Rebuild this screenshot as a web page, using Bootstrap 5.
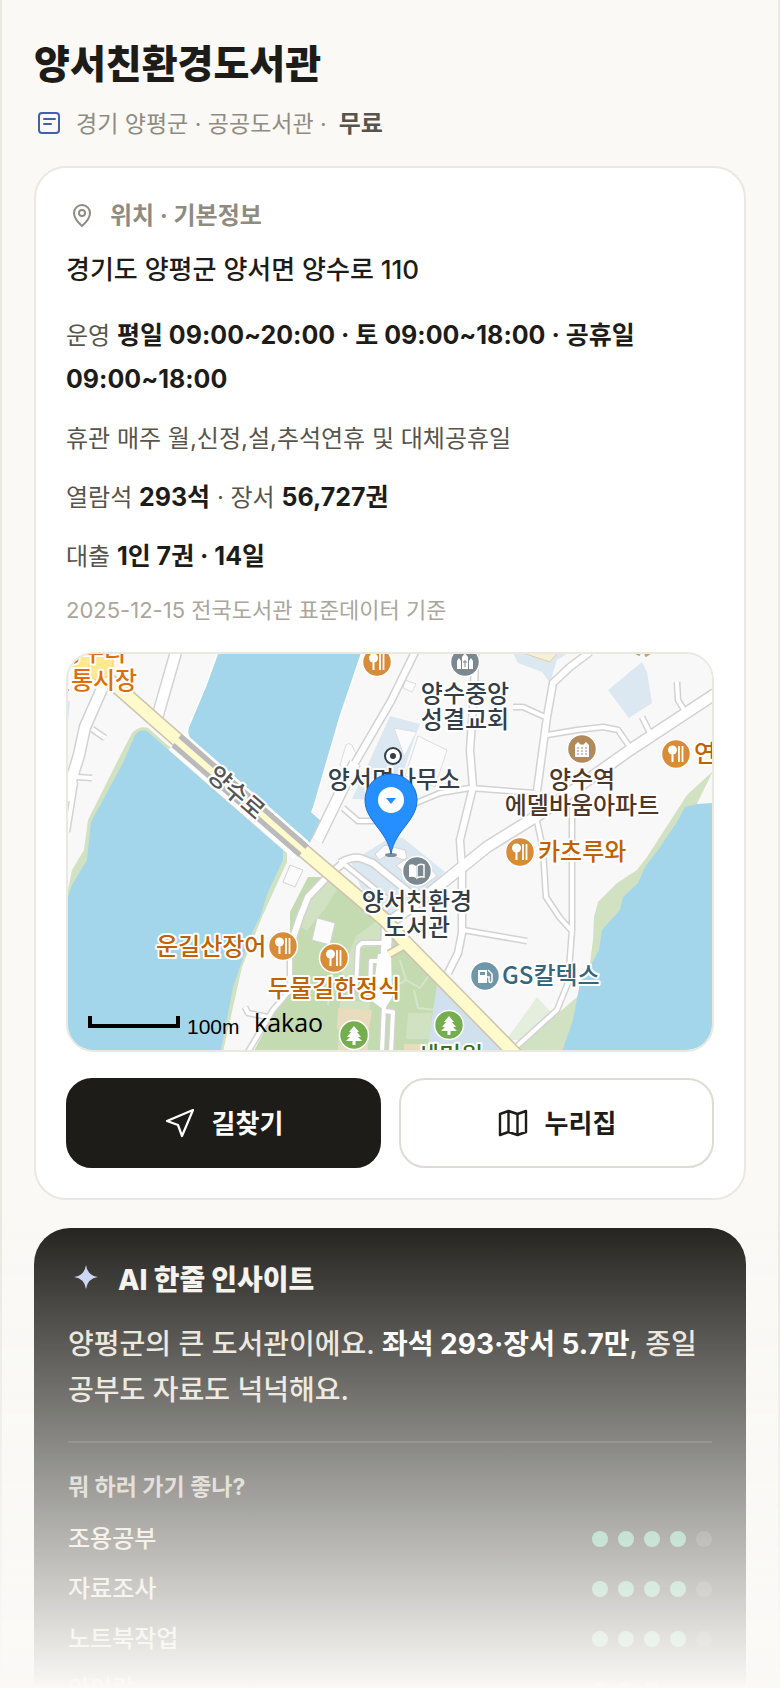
<!DOCTYPE html>
<html lang="ko">
<head>
<meta charset="utf-8">
<meta name="viewport" content="width=device-width, initial-scale=1">
<title>양서친환경도서관</title>
<link href="https://cdn.jsdelivr.net/npm/bootstrap@5.3.0/dist/css/bootstrap.min.css" rel="stylesheet">
<style>
  :root { --ink: #1d1c18; --paper: #faf9f6; --line: #e9e8e1; --muted: #8f8b80; --sub: #57544b; }
  body { background: var(--paper); color: var(--ink); font-family: Inter, "Noto Sans CJK KR", sans-serif; font-size: 24px; line-height: 36px; }
  svg { flex: none; display: block; }
  .screen { border: solid var(--line); border-width: 0 2px; padding: 40px 32px 0; }
  .place-title { font-size: 39px; line-height: 48px; font-weight: 800; margin-bottom: 18px; }
  .place-meta { color: var(--muted); font-size: 23px; margin-bottom: 24px; }
  .place-meta strong { color: var(--sub); font-size: 24px; font-weight: 700; }
  .info-card { background: #fff; border: 2px solid var(--line); border-radius: 32px; padding: 30px; margin-bottom: 28px; }
  .info-head { color: var(--muted); font-size: 24px; line-height: 36px; font-weight: 700; margin-bottom: 16px; }
  .address { font-size: 26px; line-height: 40px; font-weight: 500; margin-bottom: 24px; }
  .facts { display: grid; gap: 15px; line-height: 44px; color: var(--sub); margin-bottom: 13px; }
  .facts p { margin: 0; }
  .facts strong { color: var(--ink); font-size: 25px; line-height: 30px; font-weight: 700; }
  .source { font-size: 22px; color: #aaa69b; margin-bottom: 24px; }
  .map-box { border: 2px solid var(--line); border-radius: 28px; overflow: hidden; height: 400px; margin-bottom: 26px; }
  .map-box text { font-family: "Noto Sans CJK KR", sans-serif; font-size: 24px; font-weight: 500; paint-order: stroke; stroke: #fff; stroke-width: 4px; stroke-linejoin: round; }
  .map-box .scale-text { font-family: "Liberation Sans", sans-serif; font-size: 21px; font-weight: 400; stroke: none; }
  .map-box .brand-text { font-family: "Open Sans", sans-serif; font-size: 25px; font-weight: 500; stroke: none; }
  .action { height: 90px; border-radius: 26px; border: 2px solid #dddbd2; font-size: 26px; font-weight: 700; gap: 16px; --bs-btn-color: var(--ink); --bs-btn-bg: #fff; }
  .action-dark { border-color: var(--ink); --bs-btn-color: #fff; --bs-btn-bg: var(--ink); }
  .actions { gap: 18px; }
  .insight { background: var(--ink); color: #e7e2d6; border-radius: 36px; padding: 32px 34px; }
  .insight-head { color: #f4f2ec; font-size: 28px; line-height: 40px; font-weight: 800; margin-bottom: 21px; gap: 14px; }
  .insight-text { font-size: 28px; line-height: 46px; font-weight: 500; margin-bottom: 28px; }
  .insight-text strong { color: #fff; font-weight: 700; }
  .fit { border-top: 2px solid rgba(255,255,255,.12); padding-top: 26px; }
  .fit-head { color: #c5c0b4; font-size: 23px; line-height: 36px; font-weight: 700; margin-bottom: 9px; }
  .fit-row { line-height: 50px; font-weight: 500; }
  .dots { gap: 10px; }
  .dots i { width: 16px; height: 16px; border-radius: 50%; background: #59b38e; }
  .dots i.off { background: rgba(255,255,255,.14); }
  .fade-out { height: 480px; background: linear-gradient(rgba(250,249,246,0), #faf9f6); pointer-events: none; }
</style>
</head>
<body>
<main class="screen vh-100 overflow-hidden position-relative">
  <h1 class="place-title">양서친환경도서관</h1>
  <p class="place-meta d-flex align-items-center">
    <svg class="me-2" width="34" height="30" viewBox="0 0 34 30" fill="none" stroke="#4260b0" stroke-width="2" stroke-linecap="round"><rect x="5" y="4" width="20" height="20" rx="3"/><path d="M10 10h11M10 15h7"/></svg>
    <span>경기 양평군 · 공공도서관 ·</span><strong class="ms-2 ps-1">무료</strong>
  </p>

  <section class="info-card">
    <h2 class="info-head d-flex align-items-center">
      <svg class="me-2" width="36" height="32" viewBox="0 0 36 32" fill="none" stroke="currentColor" stroke-width="2"><path d="M16 26c-4.500-4-8-8.500-8-13a8 8 0 0 1 16 0c0 4.500-3.500 9-8 13z"/><circle cx="16" cy="13" r="3"/></svg>
      위치 · 기본정보
    </h2>
    <p class="address">경기도 양평군 양서면 양수로 110</p>
    <div class="facts">
      <p>운영 <strong>평일 09:00~20:00 · 토 09:00~18:00 · 공휴일 09:00~18:00</strong></p>
      <p>휴관 매주 월,신정,설,추석연휴 및 대체공휴일</p>
      <p>열람석 <strong>293석</strong> · 장서 <strong>56,727권</strong></p>
      <p>대출 <strong>1인 7권 · 14일</strong></p>
    </div>
    <p class="source">2025-12-15 전국도서관 표준데이터 기준</p>

    <div class="map-box">
      <svg width="100%" height="100%" viewBox="68 654 644 396" preserveAspectRatio="xMidYMid slice" role="img" aria-label="양서친환경도서관 지도">
        <defs>
          <g id="food"><circle r="14.500" fill="#d98c38" stroke="#fff" stroke-width="1.500"/><circle cx="-3.500" cy="-4" r="4.500" fill="#fff"/><path d="M-3.500-2V8" stroke="#fff" stroke-width="2"/><path d="M3-8V8M6.500-8V8" stroke="#fff" stroke-width="1.800"/></g>
          <g id="tree"><circle r="14.500" fill="#74ae4e" stroke="#fff" stroke-width="1.500"/><path d="M0-9l5 6H3l4 5H4l4 4H1.500v4h-3V6H-8l4-4h-3l4-5h-2z" fill="#fff"/></g>
          <g id="lanes" fill="none" stroke-linejoin="round">
            <path d="M513 707h10l22 10M547 735l30-5 26-3 15 3 14 20M537 821l6 29 3 47 14 21 11 12M572 807v123l-4 53-11 27-42 38M463 930l64 11M677 682l1 18 8 13M642 717l8 16 2 8M343 808l15 13h27l31-18 24-10 30-5 65 5M92 729l13 9M77 777l15 1M75 782l-8 50M290 940v50l-17 20-25 42M245 1007l3 6 20 4M344 864l42 34M356 985l2-38 4-4h20M370 990l1-29h12M384 1005l-2 47M384 1011l9 1-2 40"/>
          </g>
          <g id="streets" fill="none" stroke-linejoin="round">
            <path d="M475 653l-1 40-4 57 3 37-13 53 2 30v63l-4 20-10 20M590 652l-20 15-17 16-6 34-10 74M415 652l-24 49-36 62M343 863l-16 14-19 20-8 20-10 30M340 863q10-6 20-5l13 5 17 14 25 20"/>
          </g>
          <g id="avenues" fill="none" stroke-linejoin="round">
            <path d="M715 694l-85 56-93 66-50 31-57 46-44 32M355 763l-38 78M176 652l-19 66M104 684l-19 43-6 28-14 45M387 926l-3 74"/>
          </g>
        </defs>
        <path fill="#f8f8f8" d="M0 600h800v500H0z"/>
        <path fill="#dbe8f1" d="M642 662l5 10 5 31-23 15-21-28zM513 653l5 10 24 9 8 11 7-23 13-8zM390 716l30 8-8 21-17 55-43-1 18-39zM68 700l2 2-2 20z"/>
        <path fill="#f8efd8" stroke="#e2cfa2" d="M520 652l30 10 8-10z"/>
        <path fill="#fbfbfb" stroke="#ddd" d="M418 736l29 14-12 37-30-11zM404 756l-10-28 22 4M340 765l6-20q2-3 6 0l6 14-6 16zM405 680l11 4-4 8-9-4z"/>
        <path fill="#c4dab0" d="M327 877l13 6 45 43 20 18 35 34-12 77H252l18-35 20-33v-75l18-35z"/>
        <path fill="#d0e2c1" d="M327 877l14 6-16 26-18 22-8-6 9-28zM356 936l22-16 10 12-6 14-24 2-2 40-18-6zM340 1000l30 2-2 48h-30zM408 1013h24l-2 26h-24z"/>
        <path fill="none" stroke="#d5e5c8" stroke-width="2" d="M328 1005l6-45M390 990l16-10 14 8 10-14M406 980l-6-20M414 990l4 18 18 2"/>
        <path fill="#e8dcbc" d="M338 1008l34 2-3 20-32-1zM338 1046h30v6h-30zM404 1044h22v8h-22z"/>
        <path fill="#d0e1ed" d="M438 978l74 74h-85z"/>
        <path fill="#dbe8f1" d="M351 862l40-25 12 1 42 34-44 46h-14l-26-30z"/>
        <path fill="#fbfbfb" stroke="#d4d4d4" d="M317 918l18 5-5 22-18-5zM290 865l13 5-8 17-12-5zM375 854l10-9 20 5 2 8-4 2-14-6-10 6zM396 866l8-6 28 10 5 6-14 10z"/>
        <path fill="#e4eedd" d="M537 997l15 16-29 27h-17z"/>
        <path fill="#d0e2c1" d="M713 771l-26 24-40 62-10 13-20 13-19 19-4 15-1 23-3 23-13 34-30 26-32 29h60z"/>
        <path fill="#a3d6eb" d="M713 803l-16 1-12 3-8 15-19 28-13 17-7 16-15 14-3 13-18 20-3 20-7 13-12 20-7 37-6 17-5 15h151z"/>
        <path fill="#a3d6eb" stroke="#fff" stroke-width="1.500" d="M218 652l-12 33-18 43q-2 9 5 13l117 103 12-23-10-9 3-9 25-86 22-65z"/>
        <path fill="#d0e2c1" d="M132 733q8-8 16-5l139 122v12l-25 55-20 50-19 85H66V900l6-30 12-20 4-30 30-60z"/>
        <path fill="#a3d6eb" d="M135 735q6-7 13-3l135 118v10l-15 32-8 25-8 16-12 34-7 20-11 58-2 7H67V900l5-15 15-25 1-10 3-28 32-59z"/>
        <g stroke="#d2d2d2"><use href="#lanes" stroke-width="7"/><use href="#streets" stroke-width="9"/><use href="#avenues" stroke-width="13"/></g>
        <g stroke="#fff"><use href="#lanes" stroke-width="4"/><use href="#streets" stroke-width="6"/><use href="#avenues" stroke-width="10"/></g>
        <path fill="#fff" d="M378 954h13l1 44-8 12-12-9z"/>
        <g fill="none">
          <path stroke="#fff" stroke-width="23" d="M176 741l125 109"/>
          <path stroke="#cdc3b0" stroke-width="15" d="M95 668l28 24 182 160 80 68 20 22 120 122"/>
          <path stroke="#cdc3b0" stroke-width="9" d="M407 944l-18 10"/>
          <path stroke="#fffacb" stroke-width="6" d="M407 944l-18 10"/>
          <path stroke="#fffacb" stroke-width="12" d="M95 668l28 24 182 160 80 68 20 22 120 122"/>
          <path stroke="#bababa" stroke-width="5" d="M180 736l127 111M173 745l127 110"/>
        </g>
        <path fill="#ffe88f" stroke="#e8d27c" d="M68 658l18-4 27 3v10l-6 10-12 3-14-12-12-3z"/>

        <g fill="#323e48" text-anchor="middle">
          <text x="465" y="702">양수중앙</text><text x="465" y="728">성결교회</text>
          <text x="394" y="788">양서면사무소</text>
          <text x="417" y="910">양서친환경</text><text x="417" y="936">도서관</text>
        </g>
        <g fill="#4f3728" text-anchor="middle"><text x="582" y="788">양수역</text><text x="582" y="814">에델바움아파트</text></g>
        <g fill="#e06c0a" text-anchor="middle"><text x="93" y="661">양수리</text><text x="93" y="689">전통시장</text></g>
        <g fill="#c16100">
          <text x="694" y="762">연밭</text><text x="538" y="860">카츠루와</text>
          <text x="156" y="955">운길산장어</text><text x="334" y="997" text-anchor="middle">두물길한정식</text>
          <path d="M635 652l5 3M645 656l6-4" stroke="#c8a468" stroke-width="3"/>
        </g>
        <text x="502" y="984" fill="#35667d">GS칼텍스</text>
        <text x="450" y="1064" fill="#3f6f23" text-anchor="middle">세미원</text>
        <text transform="translate(236 793) rotate(41)" x="0" y="8" fill="#555" text-anchor="middle">양수로</text>

        <use href="#food" x="377" y="662"/><use href="#food" x="676" y="754"/><use href="#food" x="520" y="852"/><use href="#food" x="283" y="946"/><use href="#food" x="334" y="958"/>
        <use href="#tree" x="354" y="1035"/><use href="#tree" x="449" y="1025"/>
        <g transform="translate(465 662)"><circle r="14.500" fill="#7b8890" stroke="#fff" stroke-width="1.500"/><path fill="#fff" d="M-8 7v-8l2-3 2 3v8zM4 7v-8l2-3 2 3v8zM-3 7V-5L0-9l3 4V7z"/><path d="M0-2v7M-2 0h4" stroke="#7b8890"/></g>
        <g transform="translate(582 749)"><circle r="14.500" fill="#b08a59" stroke="#fff" stroke-width="1.500"/><path fill="#fff" d="M-7 8V-4l3-3 3 3 1-1 1 1 3-3 3 3V8z"/><path d="M-5-1H6M-5 2H6M-5 5H6" stroke="#b08a59" stroke-dasharray="2 2"/></g>
        <g transform="translate(417 871)"><circle r="14.500" fill="#7b8890" stroke="#fff" stroke-width="1.500"/><path fill="#fff" d="M-8-6q4-2 7 1V7q-3-2-7-1z"/><path fill="none" stroke="#fff" stroke-width="1.500" d="M0-5q3-3 7-1V6q-4-1-7 1z"/></g>
        <g transform="translate(485 976)"><circle r="14.500" fill="#6f97a9" stroke="#fff" stroke-width="1.500"/><path fill="#fff" fill-rule="evenodd" d="M-7-6H2V7H-7zM-5-4v3H0v-3z"/><path fill="none" stroke="#fff" stroke-width="1.500" d="M3-6l4 4v7q-2 3-3 0V1H2"/></g>
        <circle cx="393" cy="756" r="8" fill="#fff" stroke="#323e48" stroke-width="2"/><circle cx="393" cy="756" r="3" fill="#323e48"/>
        <ellipse cx="391" cy="855" rx="6" ry="2" fill="#7c8b96"/>
        <path fill="#258fff" stroke="#1a6fd6" d="M391 854c-4-24-26-33-26-54a26 26 0 0 1 52 0c0 21-22 30-26 54z"/>
        <circle cx="391" cy="800" r="13" fill="#fff"/><path fill="#258fff" d="M386 798h10l-5 6z"/>
        <path fill="none" stroke="#000" stroke-width="4" d="M90 1016v10h88v-10"/>
        <text class="scale-text" x="187" y="1034">100m</text>
        <text class="brand-text" x="254" y="1032">kakao</text>
      </svg>
    </div>

    <div class="actions d-flex">
      <button type="button" class="action action-dark btn d-flex flex-fill align-items-center justify-content-center">
        <svg width="32" height="32" viewBox="0 0 32 32" fill="none" stroke="currentColor" stroke-width="2.200" stroke-linejoin="round"><path d="M29 3L3 14l11 4 4 11z"/></svg>길찾기
      </button>
      <button type="button" class="action btn d-flex flex-fill align-items-center justify-content-center">
        <svg width="32" height="32" viewBox="0 0 32 32" fill="none" stroke="currentColor" stroke-width="2.400" stroke-linejoin="round"><path d="M3 7l8.500-3 9 3L29 4v21l-8.500 3-9-3L3 28zM11.500 4v21M20.500 7v21"/></svg>누리집
      </button>
    </div>
  </section>

  <section class="insight">
    <h2 class="insight-head d-flex align-items-center">
      <svg width="36" height="36" viewBox="0 0 36 36" fill="#c6d1f2"><path d="M18 3q1.500 10.500 12 12-10.500 1.500-12 12-1.500-10.500-12-12 10.500-1.500 12-12z"/></svg>AI 한줄 인사이트
    </h2>
    <p class="insight-text">양평군의 큰 도서관이에요. <strong>좌석 293·장서 5.7만</strong>, 종일 공부도 자료도 넉넉해요.</p>
    <div class="fit">
      <h3 class="fit-head">뭐 하러 가기 좋나?</h3>
      <div class="fit-row d-flex justify-content-between align-items-center">조용공부<span class="dots d-flex"><i></i><i></i><i></i><i></i><i class="off"></i></span></div>
      <div class="fit-row d-flex justify-content-between align-items-center">자료조사<span class="dots d-flex"><i></i><i></i><i></i><i></i><i class="off"></i></span></div>
      <div class="fit-row d-flex justify-content-between align-items-center">노트북작업<span class="dots d-flex"><i></i><i></i><i></i><i></i><i class="off"></i></span></div>
      <div class="fit-row d-flex justify-content-between align-items-center">아이랑<span class="dots d-flex"><i></i><i></i><i></i><i class="off"></i><i class="off"></i></span></div>
    </div>
  </section>
  <div class="fade-out position-fixed bottom-0 start-0 end-0"></div>
</main>
<script src="https://cdn.jsdelivr.net/npm/bootstrap@5.3.0/dist/js/bootstrap.bundle.min.js"></script>
</body>
</html>
